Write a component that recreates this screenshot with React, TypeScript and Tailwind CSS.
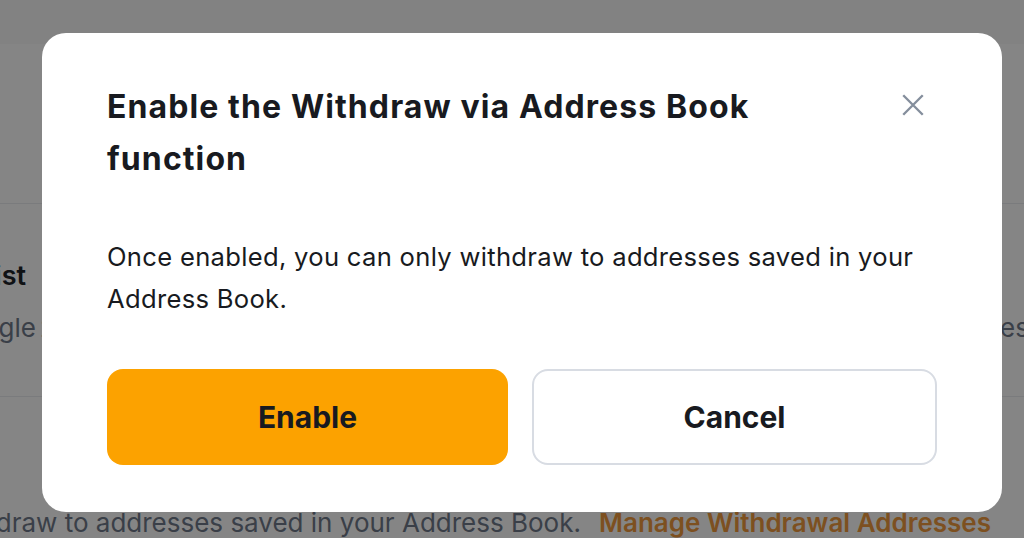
import React from "react";

export default function App() {
  return (
    <div className="relative w-[1024px] h-[538px] overflow-hidden bg-white font-['Inter',sans-serif]">
      {/* Background page */}
      <div className="flex flex-col">
        <div className="h-[44px] bg-[#fafafa]" />
        <div className="h-[159px]" />
        <div className="h-[194px] border-t border-b border-[#eaecef] flex flex-col pt-[52px]">
          <div className="flex">
            <div className="w-[26px] flex justify-end">
              <span className="whitespace-nowrap text-[27px] leading-[40px] font-semibold text-[#1e2329]">Address Book Whitelist</span>
            </div>
          </div>
          <div className="flex mt-[12px]">
            <div className="w-[36px] flex justify-end">
              <span className="whitespace-nowrap text-[26px] leading-[40px] text-[#707a8a]">When this function is turned on, your account will only be able to toggle</span>
            </div>
            <span className="whitespace-nowrap text-[26px] leading-[40px] text-[#707a8a] ml-[4px]">2FA</span>
            <div className="ml-auto w-[24px] overflow-hidden">
              <span className="whitespace-nowrap text-[26px] leading-[40px] text-[#707a8a]">es.</span>
            </div>
          </div>
        </div>
        <div className="flex justify-end pr-[33px] pt-[106px]">
          <span className="whitespace-nowrap text-[26px] leading-[40px] text-[#707a8a]">You can only withdraw to addresses saved in your Address Book.</span>
          <span className="whitespace-nowrap text-[26px] leading-[40px] font-semibold text-[#f09a3e] ml-[18px]">Manage Withdrawal Addresses</span>
        </div>
      </div>

      {/* Overlay + modal */}
      <div className="absolute inset-0 bg-black/[0.48] pl-[42px] pt-[33px]">
        <div className="w-[960px] h-[479px] bg-white rounded-[24px] px-[65px] pt-[48px] flex flex-col">
          <div className="flex items-start justify-between">
            <h2 className="text-[32px] leading-[52px] font-bold tracking-[1.1px] text-[#181a20] max-w-[720px]">
              Enable the Withdraw via Address Book function
            </h2>
            <button className="w-[48px] h-[48px] flex items-center justify-center">
              <svg width="26" height="26" viewBox="0 0 24 24" fill="none" stroke="#848e9c" strokeWidth="2.2" strokeLinecap="butt">
                <path d="M3 3 L21 21 M21 3 L3 21" />
              </svg>
            </button>
          </div>
          <p className="mt-[51px] text-[25.6px] leading-[42px] tracking-[0.3px] text-[#181a20]">
            Once enabled, you can only withdraw to addresses saved in your Address Book.
          </p>
          <div className="mt-[49px] flex gap-[24px]">
            <button className="flex-1 h-[96px] rounded-[16px] bg-[#fca200] text-[30px] font-bold text-[#181a20]">Enable</button>
            <button className="flex-1 h-[96px] rounded-[16px] border-2 border-[#d8dce3] bg-white text-[30px] font-bold text-[#181a20]">Cancel</button>
          </div>
        </div>
      </div>
    </div>
  );
}
